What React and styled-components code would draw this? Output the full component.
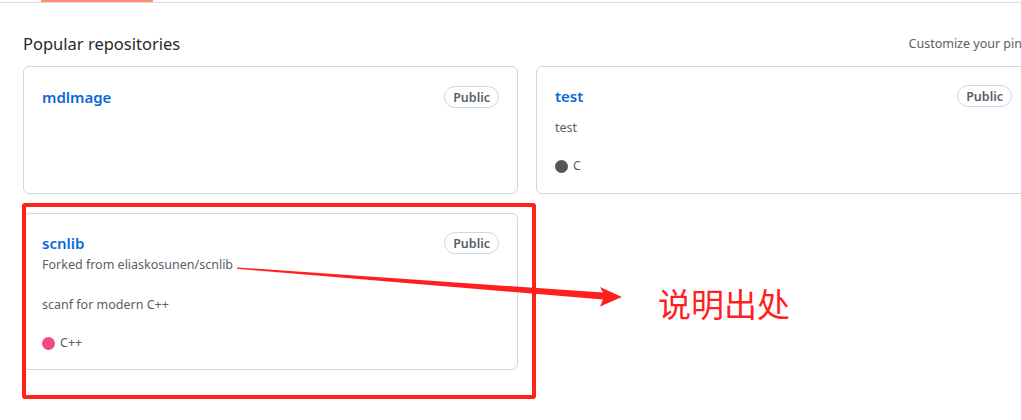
import React from 'react'
import styled, { createGlobalStyle } from 'styled-components'

const GlobalStyle = createGlobalStyle`
  html, body {
    margin: 0;
    padding: 0;
    background: #ffffff;
  }
  body {
    font-family: "Noto Sans", "Noto Sans CJK SC", sans-serif;
    color: #24292f;
  }
`

const Page = styled.div`
  position: relative;
  width: 1021px;
  height: 420px;
  overflow: hidden;
  background: #ffffff;
`

const TabBar = styled.div`
  height: 2px;
  border-bottom: 1px solid #d8dee4;
`

const TabUnderline = styled.div`
  margin-left: 41px;
  width: 112px;
  height: 2px;
  background: #fd8c73;
`

const Section = styled.section`
  padding-left: 23px;
  width: 1008px;
`

const Header = styled.div`
  display: flex;
  align-items: center;
  justify-content: space-between;
  margin-top: 28px;
  margin-bottom: 11px;
  height: 24px;
`

const Heading = styled.h2`
  margin: 0;
  font-size: 16.5px;
  font-weight: 400;
  color: #24292f;
`

const Customize = styled.a`
  font-size: 12.5px;
  color: #57606a;
  text-decoration: none;
  margin-right: 3px;
`

const Grid = styled.div`
  display: grid;
  grid-template-columns: 495px 495px;
  column-gap: 18px;
  row-gap: 19px;
  align-items: start;
`

const Card = styled.div`
  box-sizing: border-box;
  height: ${p => p.$height}px;
  border: 1px solid #d0d7de;
  border-radius: 6px;
  padding: 18px;
  display: flex;
  flex-direction: column;
`

const TitleRow = styled.div`
  display: flex;
  align-items: center;
  justify-content: space-between;
  height: 24px;
`

const RepoLink = styled.a`
  font-size: 15px;
  font-weight: 600;
  color: #0969da;
  text-decoration: none;
`

const Badge = styled.span`
  box-sizing: border-box;
  height: 22px;
  display: inline-flex;
  align-items: center;
  padding: 0 8px;
  border: 1px solid #d0d7de;
  border-radius: 11px;
  font-size: 12.5px;
  font-weight: 600;
  color: #57606a;
`

const Fork = styled.div`
  margin-top: 1px;
  font-size: 12.5px;
  line-height: 20px;
  color: #57606a;
`

const Description = styled.p`
  margin: ${p => p.$top}px 0 0;
  font-size: 12.5px;
  line-height: 20px;
  color: #57606a;
`

const Language = styled.div`
  margin-top: ${p => p.$top}px;
  display: flex;
  align-items: center;
  gap: 5px;
  font-size: 12.5px;
  line-height: 20px;
  color: #57606a;
`

const Dot = styled.span`
  width: 13px;
  height: 13px;
  border-radius: 50%;
  background: ${p => p.$color};
`

const Highlight = styled.div`
  position: absolute;
  left: 22px;
  top: 203px;
  width: 514px;
  height: 196px;
  box-sizing: border-box;
  border: 4px solid #ff2218;
  border-radius: 3px;
  pointer-events: none;
`

const Arrow = styled.svg`
  position: absolute;
  left: 0;
  top: 0;
  pointer-events: none;
`

const Note = styled.div`
  position: absolute;
  left: 658px;
  top: 283px;
  font-family: "Noto Sans CJK SC", sans-serif;
  font-size: 33px;
  line-height: 40px;
  color: #ff1f1f;
`

const repos = [
  { name: 'mdlmage', height: 128 },
  { name: 'test', height: 128, desc: 'test', descTop: 11, lang: 'C', color: '#555555', langTop: 18 },
  {
    name: 'scnlib',
    height: 157,
    fork: 'Forked from eliaskosunen/scnlib',
    desc: 'scanf for modern C++',
    descTop: 20,
    lang: 'C++',
    color: '#f34b7d',
    langTop: 18,
  },
]

function RepoCard({ repo }) {
  return (
    <Card $height={repo.height}>
      <TitleRow>
        <RepoLink href="#">{repo.name}</RepoLink>
        <Badge>Public</Badge>
      </TitleRow>
      {repo.fork && <Fork>{repo.fork}</Fork>}
      {repo.desc && <Description $top={repo.descTop}>{repo.desc}</Description>}
      {repo.lang && (
        <Language $top={repo.langTop}>
          <Dot $color={repo.color} />
          {repo.lang}
        </Language>
      )}
    </Card>
  )
}

export default function App() {
  return (
    <Page>
      <GlobalStyle />
      <TabBar>
        <TabUnderline />
      </TabBar>
      <Section>
        <Header>
          <Heading>Popular repositories</Heading>
          <Customize href="#">Customize your pins</Customize>
        </Header>
        <Grid>
          {repos.map(r => (
            <RepoCard key={r.name} repo={r} />
          ))}
        </Grid>
      </Section>

      <Highlight />
      <Arrow width="1021" height="420" viewBox="0 0 1021 420">
        <polygon
          points="237,267.4 603,292.6 600,287 622,297 600,306.5 603,299.6 237,268.8"
          fill="#ff1f1f"
        />
      </Arrow>
      <Note>说明出处</Note>
    </Page>
  )
}
